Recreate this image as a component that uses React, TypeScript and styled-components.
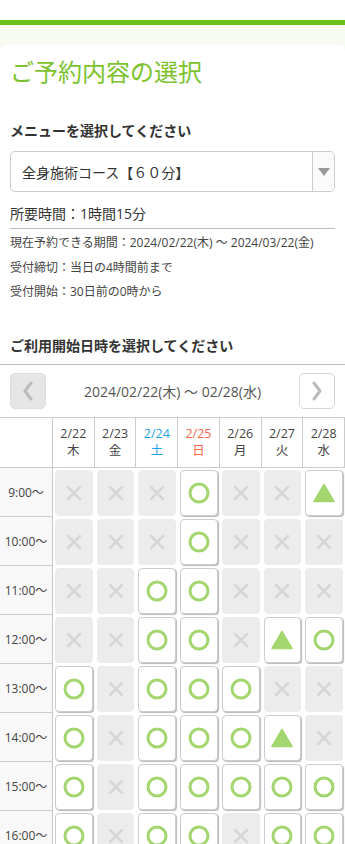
import styled, { createGlobalStyle } from 'styled-components'

type Slot = 'o' | 'x' | 't'

interface DayCol {
	date: string
	week: string
	kind?: 'sat' | 'sun'
}

const DAYS: DayCol[] = [
	{ date: `2/22`, week: `木` },
	{ date: `2/23`, week: `金` },
	{ date: `2/24`, week: `土`, kind: `sat` },
	{ date: `2/25`, week: `日`, kind: `sun` },
	{ date: `2/26`, week: `月` },
	{ date: `2/27`, week: `火` },
	{ date: `2/28`, week: `水` },
]

const ROWS: { time: string; slots: Slot[] }[] = [
	{ time: `9:00〜`, slots: [`x`, `x`, `x`, `o`, `x`, `x`, `t`] },
	{ time: `10:00〜`, slots: [`x`, `x`, `x`, `o`, `x`, `x`, `x`] },
	{ time: `11:00〜`, slots: [`x`, `x`, `o`, `o`, `x`, `x`, `x`] },
	{ time: `12:00〜`, slots: [`x`, `x`, `o`, `o`, `x`, `t`, `o`] },
	{ time: `13:00〜`, slots: [`o`, `x`, `o`, `o`, `o`, `x`, `x`] },
	{ time: `14:00〜`, slots: [`o`, `x`, `o`, `o`, `o`, `t`, `x`] },
	{ time: `15:00〜`, slots: [`o`, `x`, `o`, `o`, `o`, `o`, `o`] },
	{ time: `16:00〜`, slots: [`o`, `x`, `o`, `o`, `x`, `o`, `o`] },
]

const GREEN = `#a3d66f`

const GlobalStyle = createGlobalStyle`
	body {
		margin: 0;
		background: #fff;
		color: #333;
		font-family: "Open Sans", "Noto Sans CJK JP", sans-serif;
	}
`

const PageStyled = styled.div`
	padding-top: 20px;
`

const TopBarStyled = styled.div`
	height: 5px;
	background: #6bbf1f;
`

const BackdropStyled = styled.div`
	background: #f7fbf1;
	padding-top: 20px;
`

const CardStyled = styled.main`
	background: #fff;
	border-radius: 6px 6px 0 0;
	padding-top: 11px;
`

const TitleStyled = styled.h1`
	margin: 0;
	padding: 0 10px;
	font-size: 24px;
	line-height: 32px;
	font-weight: 400;
	color: #7bc22d;
`

const LabelStyled = styled.h2<{ $top: number }>`
	margin: ${({ $top }): number => $top}px 0 0;
	padding: 0 10px;
	font-size: 14px;
	line-height: 20px;
	font-weight: 700;
	color: #333;
`

const SelectStyled = styled.div`
	margin: 10px 10px 0;
	height: 39px;
	border: 1px solid #ccc;
	border-radius: 5px;
	display: flex;
	align-items: stretch;
	overflow: hidden;
`

const SelectValueStyled = styled.div`
	flex: 1;
	display: flex;
	align-items: center;
	padding-left: 11px;
	font-size: 14px;
	color: #333;
`

const SelectArrowStyled = styled.div`
	width: 21px;
	border-left: 1px solid #ccc;
	background: #fafafa;
	display: flex;
	align-items: center;
	justify-content: center;

	&::after {
		content: '';
		border-left: 6px solid transparent;
		border-right: 6px solid transparent;
		border-top: 8px solid #999;
	}
`

const DurationStyled = styled.p`
	margin: 12px 10px 0;
	padding-bottom: 4px;
	font-size: 14px;
	line-height: 20px;
	border-bottom: 1px solid #bbb;
`

const InfoListStyled = styled.div`
	margin-top: 2px;
	padding: 0 10px;
	font-size: 12px;
	line-height: 24.5px;
	color: #444;
`

const SectionHeadStyled = styled(LabelStyled)`
	padding-bottom: 8px;
	border-bottom: 1px solid #bbb;
`

const NavStyled = styled.div`
	display: flex;
	align-items: center;
	justify-content: space-between;
	padding: 8px 10px;
	border-bottom: 1px solid #ccc;
`

const NavButtonStyled = styled.button<{ $disabled?: boolean }>`
	width: 36px;
	height: 36px;
	padding: 0;
	border: 1px solid ${({ $disabled }): string => ($disabled ? `#ddd` : `#d6d6d6`)};
	border-radius: 5px;
	background: ${({ $disabled }): string => ($disabled ? `#e6e6e6` : `#fff`)};
	display: flex;
	align-items: center;
	justify-content: center;
	cursor: pointer;
`

const RangeStyled = styled.span`
	font-size: 14px;
	color: #555;
`

const GridStyled = styled.div`
	display: grid;
	grid-template-columns: 53px repeat(7, 1fr);
`

const CornerStyled = styled.div`
	border-right: 1px solid #c8c8c8;
	border-bottom: 1px solid #ccc;
`

const DayHeadStyled = styled.div<{ $kind?: 'sat' | 'sun' }>`
	height: 50px;
	box-sizing: border-box;
	border-right: 1px solid #ccc;
	border-bottom: 1px solid #ccc;
	display: flex;
	flex-direction: column;
	align-items: center;
	justify-content: center;
	font-size: 12.5px;
	line-height: 17px;
	color: ${({ $kind }): string => ($kind === `sat` ? `#1fa3e6` : $kind === `sun` ? `#f5654a` : `#444`)};

	&:last-child {
		border-right: none;
	}
`

const TimeCellStyled = styled.div`
	height: 49px;
	box-sizing: border-box;
	background: #f8f8f8;
	border-right: 1px solid #c8c8c8;
	border-bottom: 1px solid #ccc;
	display: flex;
	align-items: center;
	justify-content: center;
	font-size: 12px;
	color: #444;
`

const SlotCellStyled = styled.div`
	height: 49px;
	box-sizing: border-box;
	padding: 2px 2px 1px 2px;
`

const SlotBoxStyled = styled.div<{ $open: boolean }>`
	height: 100%;
	box-sizing: border-box;
	border-radius: 4px;
	display: flex;
	align-items: center;
	justify-content: center;
	background: ${({ $open }): string => ($open ? `#fff` : `#ececec`)};
	border: 1px solid ${({ $open }): string => ($open ? `#ccc` : `#ececec`)};
	box-shadow: ${({ $open }): string => ($open ? `1px 1px 1px #b8b8b8` : `none`)};
	cursor: ${({ $open }): string => ($open ? `pointer` : `default`)};
`

const Chevron = ({ dir }: { dir: 'left' | 'right' }): JSX.Element => (
	<svg width="12" height="20" viewBox="0 0 12 20">
		<path
			d={dir === `left` ? `M9 2 L3 10 L9 18` : `M3 2 L9 10 L3 18`}
			fill="none"
			stroke="#bbb"
			strokeWidth="3"
			strokeLinecap="round"
			strokeLinejoin="round"
		/>
	</svg>
)

const SlotIcon = ({ slot }: { slot: Slot }): JSX.Element => {
	if (slot === `o`) {
		return (
			<svg width="22" height="22" viewBox="0 0 22 22">
				<circle cx="11" cy="11" r="9" fill="none" stroke={GREEN} strokeWidth="3" />
			</svg>
		)
	}

	if (slot === `t`) {
		return (
			<svg width="22" height="20" viewBox="0 0 22 20">
				<path d="M11 1.5 L21 18.5 L1 18.5 Z" fill={GREEN} stroke={GREEN} strokeWidth="1.5" strokeLinejoin="round" />
			</svg>
		)
	}

	return (
		<svg width="16" height="16" viewBox="0 0 16 16">
			<path d="M2 2 L14 14 M14 2 L2 14" stroke="#d6d6d6" strokeWidth="2.5" strokeLinecap="round" />
		</svg>
	)
}

const App = (): JSX.Element => (
	<PageStyled>
		<GlobalStyle />
		<TopBarStyled />
		<BackdropStyled>
			<CardStyled>
				<TitleStyled>ご予約内容の選択</TitleStyled>

				<LabelStyled $top={33}>メニューを選択してください</LabelStyled>
				<SelectStyled>
					<SelectValueStyled>全身施術コース【６０分】</SelectValueStyled>
					<SelectArrowStyled />
				</SelectStyled>

				<DurationStyled>所要時間：1時間15分</DurationStyled>
				<InfoListStyled>
					<div>現在予約できる期間：2024/02/22(木) 〜 2024/03/22(金)</div>
					<div>受付締切：当日の4時間前まで</div>
					<div>受付開始：30日前の0時から</div>
				</InfoListStyled>

				<SectionHeadStyled $top={31}>ご利用開始日時を選択してください</SectionHeadStyled>

				<NavStyled>
					<NavButtonStyled type="button" $disabled>
						<Chevron dir="left" />
					</NavButtonStyled>
					<RangeStyled>2024/02/22(木) 〜 02/28(水)</RangeStyled>
					<NavButtonStyled type="button">
						<Chevron dir="right" />
					</NavButtonStyled>
				</NavStyled>

				<GridStyled>
					<CornerStyled />
					{DAYS.map(day => (
						<DayHeadStyled key={day.date} $kind={day.kind}>
							<span>{day.date}</span>
							<span>{day.week}</span>
						</DayHeadStyled>
					))}
					{ROWS.map(row => [
						<TimeCellStyled key={row.time}>{row.time}</TimeCellStyled>,
						...row.slots.map((slot, i) => (
							<SlotCellStyled key={`${row.time}-${i}`}>
								<SlotBoxStyled $open={slot !== `x`}>
									<SlotIcon slot={slot} />
								</SlotBoxStyled>
							</SlotCellStyled>
						)),
					])}
				</GridStyled>
			</CardStyled>
		</BackdropStyled>
	</PageStyled>
)

export default App
